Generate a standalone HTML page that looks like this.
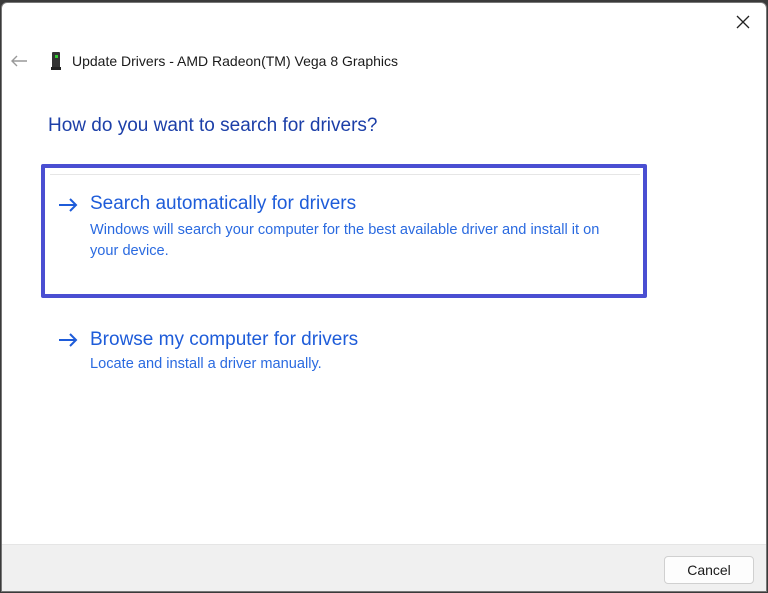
<!DOCTYPE html>
<html><head><meta charset="utf-8"><style>
body{margin:0;width:768px;height:593px;background:#3a3a3a;font-family:"Liberation Sans",sans-serif;overflow:hidden;position:relative}
.win{position:absolute;left:1px;top:2px;width:764px;height:588px;background:#fff;border:1px solid #777;border-radius:6px 6px 0 0;overflow:hidden}
.foot{position:absolute;left:0;top:541px;width:100%;height:50px;background:#f0f0f0;border-top:1px solid #e5e5e5}
.btn{position:absolute;left:662px;top:11px;width:88px;height:26px;background:#fdfdfd;border:1px solid #d0d0d0;border-radius:4px;font-size:14px;text-align:center;line-height:26px;color:#1a1a1a}
.t{position:absolute;white-space:nowrap}
.box{position:absolute;left:39px;top:161px;width:598px;height:126px;border:4px solid #4a4fd2;border-radius:2px}
.inner{position:absolute;left:5px;top:6px;right:3px;height:0;border-top:1px solid #e6e6e6}
</style></head><body>
<div class="win">
<svg class="t" style="left:734px;top:12px" width="14" height="14"><path d="M1 1L13 13M13 1L1 13" stroke="#222" stroke-width="1.3"/></svg>
<svg class="t" style="left:8px;top:51px" width="18" height="14"><path d="M17 7H2M7 2L2 7L7 12" stroke="#999" stroke-width="1.4" fill="none"/></svg>
<svg class="t" style="left:48px;top:48px" width="12" height="20"><rect x="2" y="1" width="8" height="16" rx="1" fill="#333"/><rect x="5" y="4" width="3" height="3" fill="#3c3"/><rect x="1" y="16" width="10" height="3" fill="#222"/></svg>
<div class="t" style="left:70px;top:50px;font-size:14px;color:#1a1a1a">Update Drivers - AMD Radeon(TM) Vega 8 Graphics</div>
<div class="t" style="left:46px;top:112px;font-size:19px;color:#1c3fa8">How do you want to search for drivers?</div>
<div class="box"><div class="inner"></div></div>
<svg class="t" style="left:56px;top:194px" width="20" height="16"><path d="M1 8H18M12 2L18 8L12 14" stroke="#1e5cd9" stroke-width="2" fill="none"/></svg>
<div class="t" style="left:88px;top:190px;font-size:19px;color:#1e5cd9">Search automatically for drivers</div>
<div class="t" style="left:88px;top:217px;font-size:14.6px;color:#2a6ae0;line-height:21px">Windows will search your computer for the best available driver and install it on<br>your device.</div>
<svg class="t" style="left:56px;top:329px" width="20" height="16"><path d="M1 8H18M12 2L18 8L12 14" stroke="#1e5cd9" stroke-width="2" fill="none"/></svg>
<div class="t" style="left:88px;top:326px;font-size:19px;color:#1e5cd9">Browse my computer for drivers</div>
<div class="t" style="left:88px;top:353px;font-size:14.6px;color:#2a6ae0">Locate and install a driver manually.</div>
<div class="foot"><div class="btn">Cancel</div></div>
</div>
</body></html>
